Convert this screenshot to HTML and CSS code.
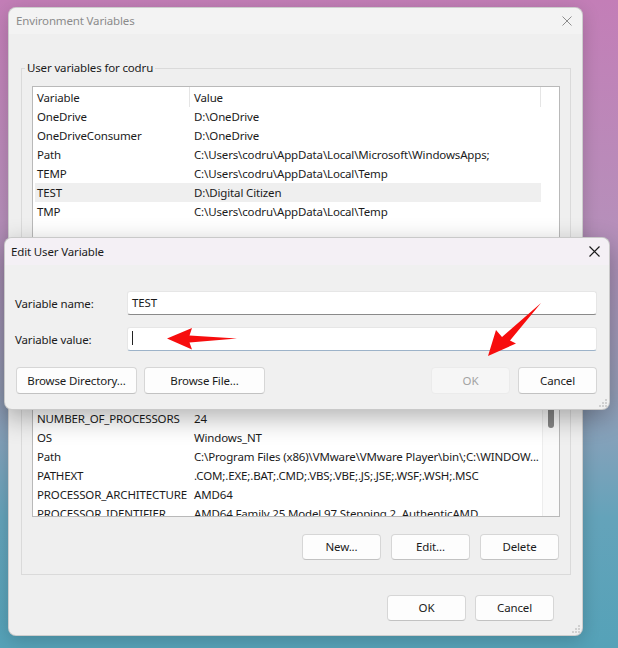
FILE: index.html
```html
<!DOCTYPE html>
<html lang="en">
<head>
    <meta charset="UTF-8">
    <meta name="viewport" content="width=device-width, initial-scale=1.0">
    <title>Environment Variables</title>
    <link rel="stylesheet" href="styles.css">
</head>
<body>
    <div class="window">
        <div class="titlebar">
            <span class="title">Environment Variables</span>
            <svg class="close" width="10" height="10" viewBox="0 0 10 10"><path d="M0.5 0.5L9.5 9.5M9.5 0.5L0.5 9.5"/></svg>
        </div>
        <div class="window-body">
            <fieldset class="group">
                <legend>User variables for codru</legend>
                <div class="list user-list">
                    <div class="list-view">
                        <div class="row head"><span class="col-var">Variable</span><span class="col-val">Value</span></div>
                        <div class="row"><span class="col-var">OneDrive</span><span class="col-val">D:\OneDrive</span></div>
                        <div class="row"><span class="col-var">OneDriveConsumer</span><span class="col-val">D:\OneDrive</span></div>
                        <div class="row"><span class="col-var">Path</span><span class="col-val">C:\Users\codru\AppData\Local\Microsoft\WindowsApps;</span></div>
                        <div class="row"><span class="col-var">TEMP</span><span class="col-val">C:\Users\codru\AppData\Local\Temp</span></div>
                        <div class="row selected"><span class="col-var">TEST</span><span class="col-val">D:\Digital Citizen</span></div>
                        <div class="row"><span class="col-var">TMP</span><span class="col-val">C:\Users\codru\AppData\Local\Temp</span></div>
                    </div>
                </div>
                <div class="btn-row">
                    <button class="btn">New...</button>
                    <button class="btn">Edit...</button>
                    <button class="btn">Delete</button>
                </div>
            </fieldset>

            <fieldset class="group">
                <legend>System variables</legend>
                <div class="list sys-list">
                    <div class="list-view">
                        <div class="row head"><span class="col-var">Variable</span><span class="col-val">Value</span></div>
                        <div class="row"><span class="col-var">ComSpec</span><span class="col-val">C:\WINDOWS\system32\cmd.exe</span></div>
                        <div class="row"><span class="col-var">DriverData</span><span class="col-val">C:\Windows\System32\Drivers\DriverData</span></div>
                        <div class="row"><span class="col-var">MOZ_PLUGIN_PATH</span><span class="col-val">C:\Program Files\plugins</span></div>
                        <div class="row"><span class="col-var">NUMBER_OF_PROCESSORS</span><span class="col-val">24</span></div>
                        <div class="row"><span class="col-var">OS</span><span class="col-val">Windows_NT</span></div>
                        <div class="row"><span class="col-var">Path</span><span class="col-val">C:\Program Files (x86)\VMware\VMware Player\bin\;C:\WINDOW...</span></div>
                        <div class="row"><span class="col-var">PATHEXT</span><span class="col-val">.COM;.EXE;.BAT;.CMD;.VBS;.VBE;.JS;.JSE;.WSF;.WSH;.MSC</span></div>
                        <div class="row"><span class="col-var">PROCESSOR_ARCHITECTURE</span><span class="col-val">AMD64</span></div>
                        <div class="row"><span class="col-var">PROCESSOR_IDENTIFIER</span><span class="col-val">AMD64 Family 25 Model 97 Stepping 2, AuthenticAMD</span></div>
                        <div class="row"><span class="col-var">PROCESSOR_LEVEL</span><span class="col-val">25</span></div>
                    </div>
                    <div class="scrollbar"><div class="thumb"></div></div>
                </div>
                <div class="btn-row">
                    <button class="btn">New...</button>
                    <button class="btn">Edit...</button>
                    <button class="btn">Delete</button>
                </div>
            </fieldset>

            <div class="footer">
                <button class="btn">OK</button>
                <button class="btn">Cancel</button>
            </div>
        </div>
        <svg class="grip" width="8" height="8" viewBox="0 0 8 8"><circle cx="7" cy="1" r="0.7"/><circle cx="4" cy="4" r="0.7"/><circle cx="7" cy="4" r="0.7"/><circle cx="1" cy="7" r="0.7"/><circle cx="4" cy="7" r="0.7"/><circle cx="7" cy="7" r="0.7"/></svg>
    </div>

    <!-- Edit dialog on top of the main window -->
    <div class="dialog">
        <div class="titlebar dialog-titlebar">
            <span class="title">Edit User Variable</span>
            <svg class="close" width="11" height="11" viewBox="0 0 11 11"><path d="M0.5 0.5L10.5 10.5M10.5 0.5L0.5 10.5"/></svg>
        </div>
        <div class="dialog-body">
            <div class="form">
                <label class="form-label">Variable name:</label>
                <div class="textbox">TEST</div>
                <label class="form-label">Variable value:</label>
                <div class="textbox focused"><span class="caret"></span></div>
            </div>
            <div class="dialog-buttons">
                <div class="btn-group">
                    <button class="btn wide">Browse Directory...</button>
                    <button class="btn wide">Browse File...</button>
                </div>
                <div class="btn-group">
                    <button class="btn disabled">OK</button>
                    <button class="btn">Cancel</button>
                </div>
            </div>
        </div>
        <svg class="grip" width="8" height="8" viewBox="0 0 8 8"><circle cx="7" cy="1" r="0.7"/><circle cx="4" cy="4" r="0.7"/><circle cx="7" cy="4" r="0.7"/><circle cx="1" cy="7" r="0.7"/><circle cx="4" cy="7" r="0.7"/><circle cx="7" cy="7" r="0.7"/></svg>
    </div>

    <!-- red annotation arrows -->
    <svg class="arrows" width="618" height="648" viewBox="0 0 618 648">
        <polygon points="167,338.5 192,328 189.5,335.5 237,338.5 189.5,342.5 192,349.5"/>
        <polygon points="488,356 496,330 502,337 541,303 510,340.5 516,343.5"/>
    </svg>
</body>
</html>
```

FILE: styles.css
```css
* {
    box-sizing: border-box;
}
body {
    margin: 0;
    height: 648px;
    overflow: hidden;
    position: relative;
    font-family: "Noto Sans", sans-serif;
    font-size: 11.5px;
    letter-spacing: -0.15px;
    color: #1b1b1b;
    background: linear-gradient(180deg, #c37eb7 0%, #b68fba 35%, #98a0ba 60%, #64a3ba 80%, #55a2b8 100%);
}
.window {
    position: relative;
    margin: 7px 0 0 8px;
    width: 575px;
    background-color: #efefef;
    border: 1px solid rgba(0, 0, 0, 0.14);
    border-radius: 8px;
    box-shadow: 0 4px 18px rgba(0, 0, 0, 0.18);
}
.titlebar {
    height: 26px;
    display: flex;
    align-items: center;
    justify-content: space-between;
    padding: 0 10px 1px 7px;
    background-color: #f3f3f3;
    border-radius: 8px 8px 0 0;
}
.titlebar .title {
    color: #8b8b8b;
}
.close path {
    stroke: #8d8d8d;
    stroke-width: 1;
    fill: none;
}
.window-body {
    padding: 0 11px 14px 12px;
}
.group {
    margin: 26px 0 0 0;
    padding: 0 0 14px 0;
    border: 1px solid #dadada;
    min-width: 0;
}
.group + .group {
    margin-top: 7px;
}
.group legend {
    margin-left: 3px;
    padding: 0 2px;
    line-height: 16px;
    color: #1b1b1b;
}
.list {
    margin: 10px 10px 0 10px;
    display: flex;
    background-color: white;
    border: 1px solid #b9b9b9;
    overflow: hidden;
}
.user-list {
    height: 154px;
}
.sys-list {
    height: 186px;
}
.list-view {
    flex: 1;
    padding-left: 2px;
    overflow: hidden;
}
.row {
    display: flex;
    width: 506px;
    height: 19px;
    line-height: 20px;
    white-space: nowrap;
}
.row.head {
    height: 20px;
    line-height: 22px;
}
.row.selected {
    background-color: #efefef;
}
.col-var {
    width: 155px;
    padding-left: 2px;
    overflow: hidden;
}
.col-val {
    flex: 1;
    padding-left: 4px;
    overflow: hidden;
}
.head .col-var, .head .col-val {
    border-right: 1px solid #e5e5e5;
}
.scrollbar {
    width: 17px;
    background-color: #fafafa;
    border-left: 1px solid #ededed;
}
.thumb {
    width: 6px;
    height: 36px;
    margin: 60px 0 0 5px;
    background-color: #858585;
    border-radius: 3px;
}
.btn-row {
    display: flex;
    justify-content: flex-end;
    gap: 10px;
    margin: 17px 11px 0 0;
}
.btn {
    width: 79px;
    height: 26px;
    padding: 0 0 1px 0;
    font-family: "Noto Sans", sans-serif;
    font-size: 11.5px;
    letter-spacing: -0.15px;
    color: #1b1b1b;
    background-color: #fdfdfd;
    border: 1px solid #d6d6d6;
    border-bottom-color: #c2c2c2;
    border-radius: 4px;
}
.btn.disabled {
    color: #a3a3a3;
    background-color: #f6f6f6;
    border-color: #ebebeb;
}
.footer {
    display: flex;
    justify-content: flex-end;
    gap: 9px;
    margin-top: 20px;
    padding-right: 17px;
}
.grip {
    position: absolute;
    right: 2px;
    bottom: 2px;
}
.grip circle {
    fill: #9a9a9a;
}

/* Edit User Variable dialog */
.dialog {
    position: absolute;
    left: 4px;
    top: 237px;
    width: 606px;
    height: 173px;
    background-color: #f0f0f0;
    border: 1px solid rgba(0, 0, 0, 0.16);
    border-radius: 8px;
    box-shadow: 0 8px 26px rgba(0, 0, 0, 0.3);
}
.dialog-titlebar {
    height: 27px;
    padding: 0 9px 1px 6px;
    background-color: #f4f0f5;
}
.dialog-titlebar .title {
    color: #1b1b1b;
}
.dialog-titlebar .close path {
    stroke: #1b1b1b;
    stroke-width: 1.2;
}
.dialog-body {
    padding: 26px 12px 0 10px;
}
.form {
    display: grid;
    grid-template-columns: 112px 1fr;
    row-gap: 12px;
    align-items: center;
}
.textbox {
    height: 24px;
    padding: 0 0 2px 4px;
    line-height: 21px;
    display: flex;
    align-items: center;
    background-color: white;
    border: 1px solid #e6e6e6;
    border-bottom-color: #8a8a8a;
    border-radius: 3px;
}
.textbox.focused {
    border-bottom-color: #9db3c9;
}
.caret {
    width: 1px;
    height: 14px;
    background-color: #222;
}
.dialog-buttons {
    display: flex;
    justify-content: space-between;
    margin: 16px 0 0 1px;
}
.btn-group {
    display: flex;
    gap: 8px;
}
.dialog-buttons .btn {
    height: 27px;
}
.btn.wide {
    width: 121px;
}
.btn-group .btn.wide + .btn.wide {
    margin-left: -1px;
}

.arrows {
    position: absolute;
    left: 0;
    top: 0;
    pointer-events: none;
}
.arrows polygon {
    fill: #f70d0d;
}
```
